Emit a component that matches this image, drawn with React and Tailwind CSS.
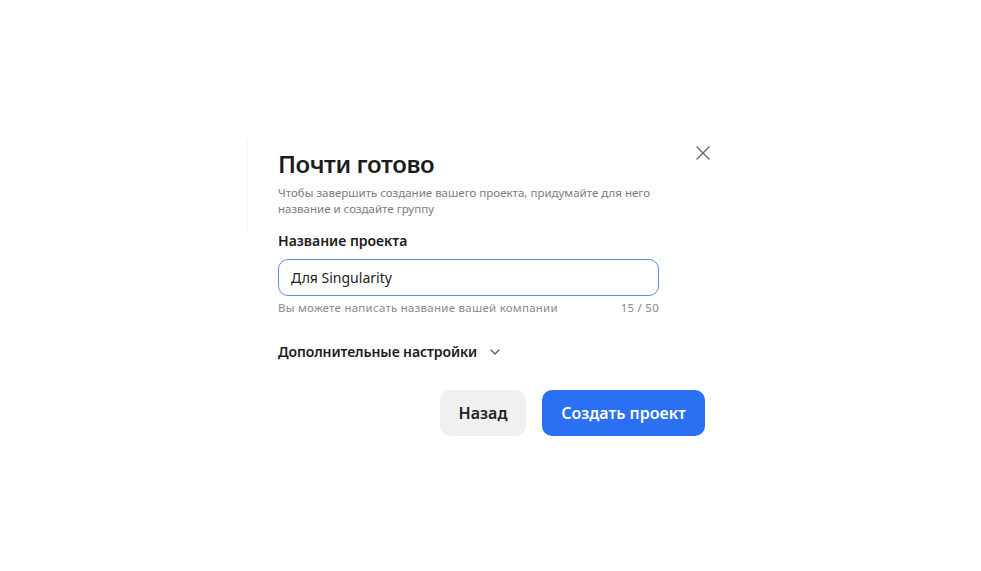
import { X, ChevronDown } from "lucide-react";

function App() {
  return (
    <div
      className="min-h-screen bg-white text-[#1c1c1c]"
      style={{ fontFamily: '"Noto Sans", "Open Sans", sans-serif' }}
    >
      <div className="pt-[139px] pl-[247px]">
        <div className="relative w-[463px]">
          <button className="absolute right-[-5px] top-[2px] text-[#707070]">
            <X size={24} strokeWidth={1.5} />
          </button>

          <div className="border-l border-[#f3f3f3] pl-[30px] pt-[9px] pb-[14px]">
            <h2 className="text-[24px] leading-[32px] font-semibold tracking-[-0.4px]">
              Почти готово
            </h2>
            <p className="mt-[5px] w-[390px] text-[11.5px] leading-[16px] text-[#7c7c7c]">
              Чтобы завершить создание вашего проекта, придумайте для него
              название и создайте группу
            </p>
          </div>

          <div className="pl-[31px]">
            <label className="block text-[14px] leading-[20px] font-semibold">
              Название проекта
            </label>
            <input
              defaultValue="Для Singularity"
              className="mt-2 block h-[37px] w-[381px] rounded-[10px] border border-[#5c8df0] px-3 text-[14px] text-[#222] outline-none"
            />
            <div className="mt-1 flex w-[381px] justify-between text-[11.5px] leading-[16px] tracking-[0.25px] text-[#8a8a8a]">
              <span>Вы можете написать название вашей компании</span>
              <span>15 / 50</span>
            </div>

            <button className="mt-[26px] flex items-center gap-[10px] text-[14px] leading-[20px] font-semibold tracking-[-0.1px]">
              Дополнительные настройки
              <ChevronDown size={16} strokeWidth={1.8} className="text-[#555]" />
            </button>

            <div className="mt-[28px] flex justify-end gap-4 pr-[5px]">
              <button className="h-[46px] w-[86px] rounded-[10px] bg-[#f0f0f0] text-[16px] font-semibold text-[#222]">
                Назад
              </button>
              <button className="h-[46px] w-[163px] rounded-[10px] bg-[#2b6ff3] text-[16px] font-semibold text-white">
                Создать проект
              </button>
            </div>
          </div>
        </div>
      </div>
    </div>
  );
}

export default App;
